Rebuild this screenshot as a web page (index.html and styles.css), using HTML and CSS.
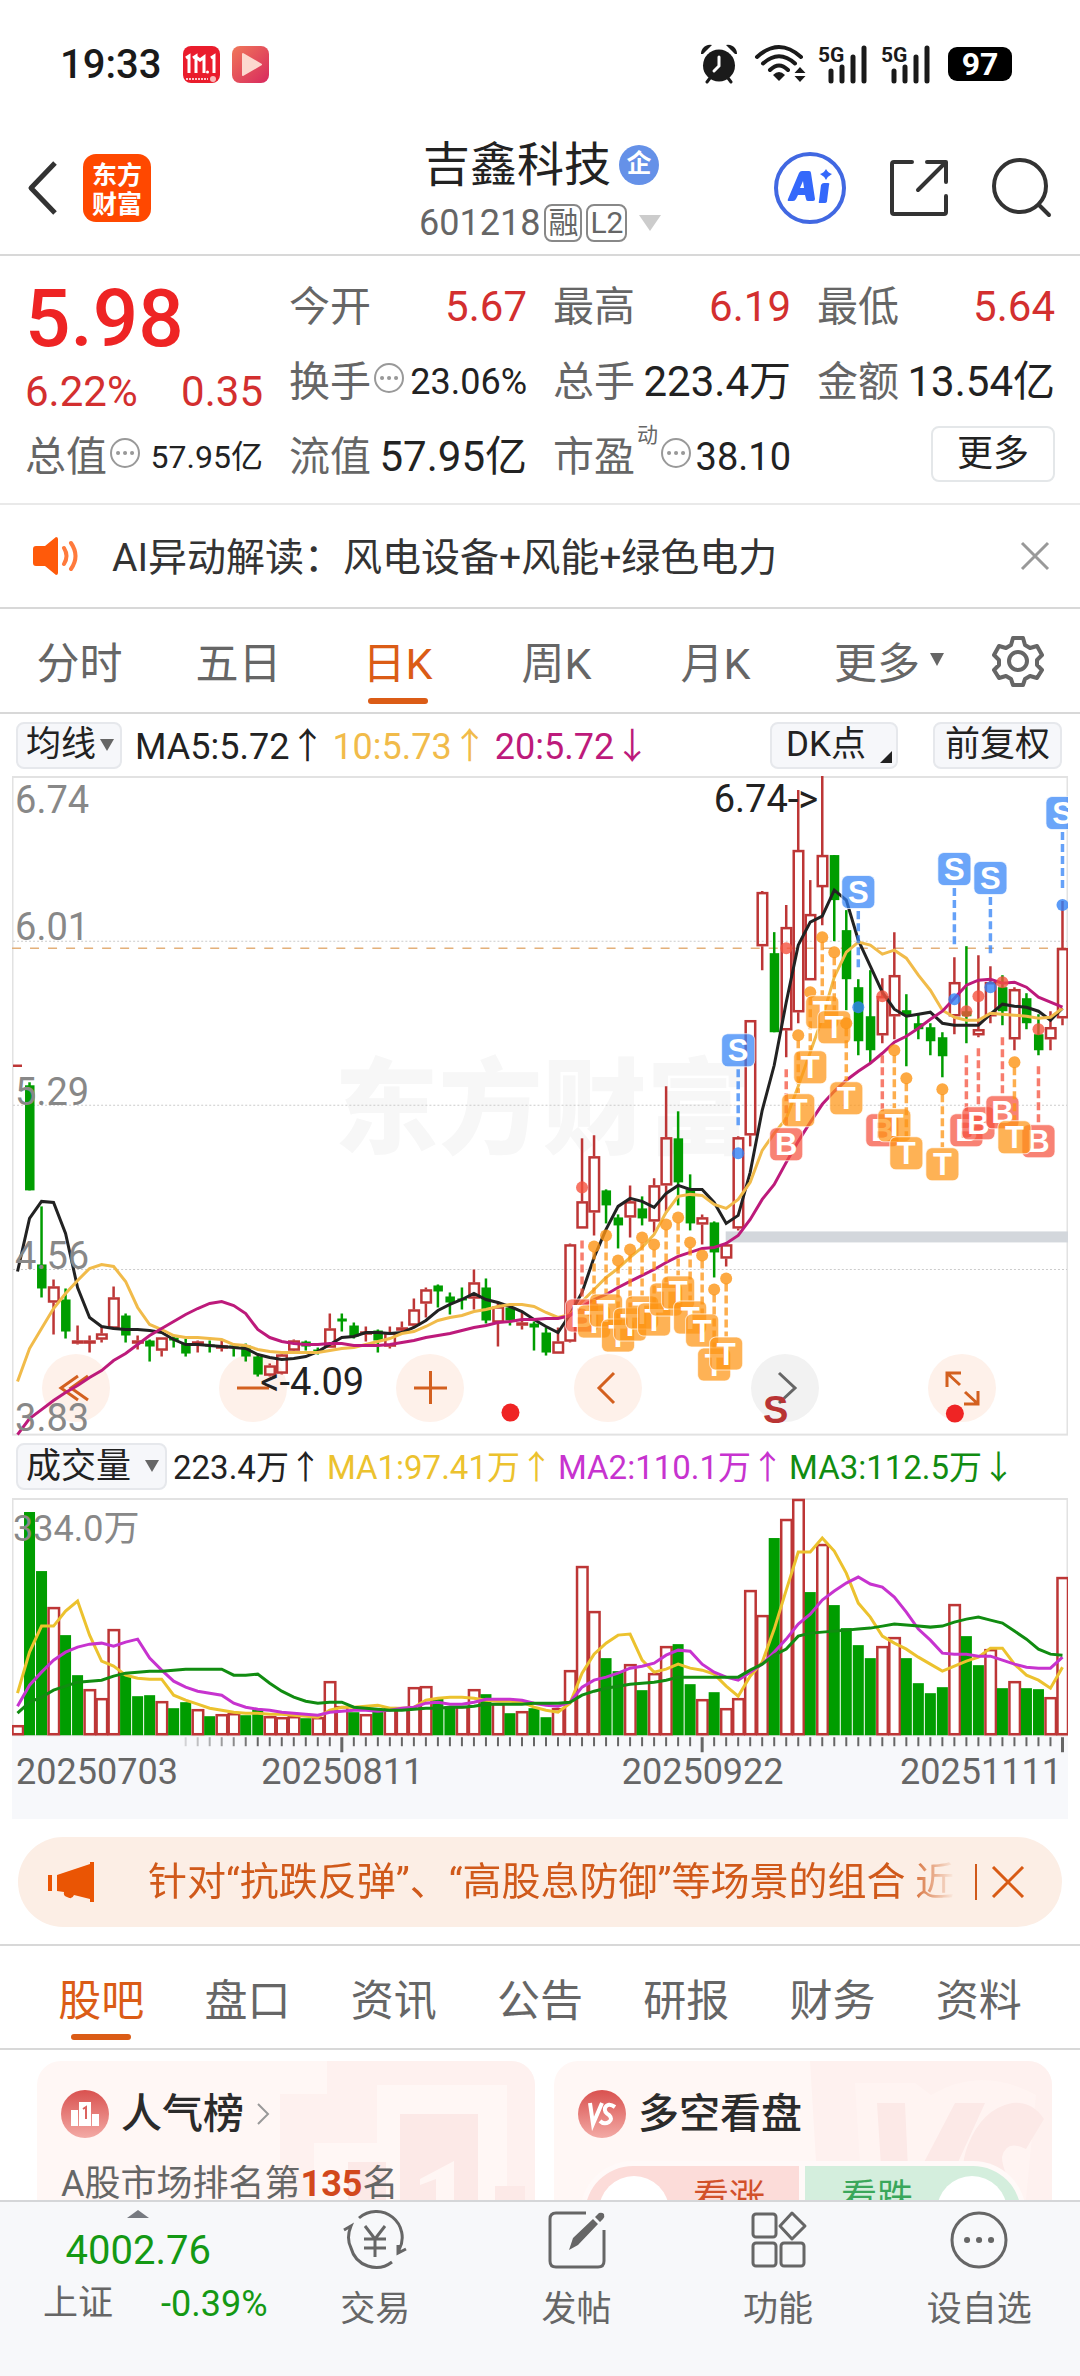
FILE: index.html
```html
<!DOCTYPE html>
<html lang="zh-CN">
<head>
<meta charset="utf-8">
<meta name="viewport" content="width=device-width, initial-scale=1">
<title>吉鑫科技 601218</title>
<link rel="stylesheet" href="styles.css">
</head>
<body>
<div class="app">
  <div class="status">
    <span class="clock">19:33</span>
    <svg class="app-ico" viewBox="0 0 37 37"><rect width="37" height="37" rx="8" fill="#ea1c2c"/><path d="M3 12l3-2v17M10 12l3-2v17M13 11l4 3 4-3v16M28 12l3-2v17" fill="none" stroke="#fff" stroke-width="3"/><circle cx="24.500" cy="26" r="1.500" fill="#fff"/><path d="M3 33h22" stroke="#fff" stroke-width="1.500" stroke-dasharray="2 1"/><circle cx="30" cy="33" r="3" fill="#f9b9b9"/></svg>
    <svg class="app-ico" viewBox="0 0 37 37"><defs><linearGradient id="play" x1="0" y1="0" x2="1" y2="1"><stop offset="0" stop-color="#f0785a"/><stop offset="1" stop-color="#d8285e"/></linearGradient></defs><rect width="37" height="37" rx="8" fill="url(#play)"/><path d="M11 8l18 10.500L11 29z" fill="#fcd9cf" stroke="#fcd9cf" stroke-width="2" stroke-linejoin="round"/></svg>
    <span class="grow"></span>
    <svg class="st-alarm" viewBox="0 0 38 40" fill="#1a1a1a"><circle cx="19" cy="21.500" r="16"/><path d="M1 10A9 9 0 0 1 12 1L3 10zM37 10A9 9 0 0 0 26 1l9 9z"/><path d="M10 34l-3 4M28 34l3 4" stroke="#1a1a1a" stroke-width="3" stroke-linecap="round"/><path d="M19 13v9l-5 5" fill="none" stroke="#fff" stroke-width="3" stroke-linecap="round"/></svg>
    <svg class="st-wifi" viewBox="0 0 52 40" fill="none" stroke="#1a1a1a" stroke-width="4" stroke-linecap="round"><path d="M3 13Q25-7 47 13M9 19.500Q25 5 41 19.500M16 26Q25 17 34 26"/><path d="M19 31q6-6 12 0l-6 6z" fill="#1a1a1a" stroke="none"/><path d="M40.500 29l5.500-6 5.500 6zM40.500 32h11L46 38z" fill="#1a1a1a" stroke="none"/></svg>
    <svg class="st-sig" viewBox="0 0 50 40"><text x="0" y="18" class="g5">5G</text><path d="M13 27v10M24 23v14M35 13v24M46 4v33" stroke="#1a1a1a" stroke-width="5" stroke-linecap="round"/></svg>
    <svg class="st-sig" viewBox="0 0 50 40"><text x="0" y="18" class="g5">5G</text><path d="M13 27v10M24 23v14M35 13v24M46 4v33" stroke="#1a1a1a" stroke-width="5" stroke-linecap="round"/></svg>
    <span class="battery">97</span>
  </div>

  <header class="head">
    <button class="ib" aria-label="返回"><svg width="32" height="56" viewBox="0 0 32 56"><path d="M28 3L4 28l24 25" fill="none" stroke="#333" stroke-width="5" stroke-linejoin="round"/></svg></button>
    <a class="brand" href="#home"><span>东方</span><span>财富</span></a>
    <div class="title">
      <h1>吉鑫科技<i class="qi">企</i></h1>
      <p>601218<b>融</b><b>L2</b><svg width="22" height="16" viewBox="0 0 22 16"><path d="M0 0h22L11 16z" fill="#ccc"/></svg></p>
    </div>
    <div class="tools">
      <button class="ib" aria-label="AI"><svg width="72" height="72" viewBox="0 0 72 72"><circle cx="36" cy="36" r="34" fill="none" stroke="#4168e2" stroke-width="4"/><path fill="#3468fb" fill-rule="evenodd" d="M25 21q1-2 3-2h7q2 0 2 2l4 26q0 2-2 2h-5q-2 0-2-2l-1-4h-7l-2 4q-1 2-3 2h-4q-2 0-1-2zM29 29l-3 7h4zM47 33q1-2 3-2h4q2 0 1 2l-2 16q0 2-3 2h-4q-2 0-1-2zM52 17q2 4 6 5-4 2-6 6-2-4-6-6 4-1 6-5z"/></svg></button>
      <button class="ib" aria-label="分享"><svg width="58" height="58" viewBox="0 0 58 58" fill="none" stroke="#333" stroke-width="4" stroke-linecap="round" stroke-linejoin="round"><path d="M22 3H4q-2 0-2 2v48q0 2 2 2h50q2 0 2-2V37M37 3h19v20M55 4L28 31"/></svg></button>
      <button class="ib" aria-label="搜索"><svg width="60" height="60" viewBox="0 0 60 60" fill="none" stroke="#333" stroke-width="4" stroke-linecap="round"><circle cx="28" cy="28" r="26"/><path d="M47 47l10 10"/></svg></button>
    </div>
  </header>

  <main class="main">
    <section class="quote">
      <div class="lead">
        <strong class="price">5.98</strong>
        <div class="row red mid"><span>6.22%</span><span>0.35</span></div>
        <div class="row"><span class="lb">总值</span><svg class="dots"><use href="#i-dots"/></svg><span class="v xs">57.95亿</span></div>
      </div>
      <div class="cell"><span class="lb">今开</span><span class="v red">5.67</span></div>
      <div class="cell"><span class="lb">最高</span><span class="v red">6.19</span></div>
      <div class="cell"><span class="lb">最低</span><span class="v red">5.64</span></div>
      <div class="cell"><span class="lb">换手</span><svg class="dots"><use href="#i-dots"/></svg><span class="v sm">23.06%</span></div>
      <div class="cell"><span class="lb">总手</span><span class="v">223.4万</span></div>
      <div class="cell"><span class="lb">金额</span><span class="v">13.54亿</span></div>
      <div class="cell"><span class="lb">流值</span><span class="v">57.95亿</span></div>
      <div class="cell"><span class="lb">市盈</span><sup class="dyn">动</sup><svg class="dots"><use href="#i-dots"/></svg><span class="v md">38.10</span></div>
      <div class="cell end"><button class="more">更多</button></div>
    </section>

    <section class="notice">
      <svg width="46" height="38" viewBox="0 0 46 38"><path d="M3 9h9L23 0q2 0 2 2v34q0 2-2 2L12 29H3q-3 0-3-3V12q0-3 3-3z" fill="#ff5a0a"/><path d="M31 11q5 8 0 16M38 6q9 13 0 26" fill="none" stroke="#ff7a3c" stroke-width="4" stroke-linecap="round"/></svg>
      <p>AI异动解读：风电设备+风能+绿色电力</p>
      <button class="ib" aria-label="关闭"><svg width="30" height="30" viewBox="0 0 30 30"><path d="M2 2l26 26M28 2L2 28" stroke="#999" stroke-width="3"/></svg></button>
    </section>

    <nav class="periods">
      <a href="#m">分时</a><a href="#d5">五日</a><a href="#d" class="on">日K</a><a href="#w">周K</a><a href="#mo">月K</a><a href="#more">更多<svg width="14" height="14" viewBox="0 0 14 14"><path d="M0 0h14L7 13z" fill="#666"/></svg></a>
      <button class="ib" aria-label="设置"><svg width="52" height="52" viewBox="0 0 52 52" fill="none" stroke="#666" stroke-width="4" stroke-linejoin="round"><path d="M21 3h10l2 7 5 3 7-2 5 9-5 5v5l5 5-5 8-7-2-5 3-2 6H21l-2-6-5-3-7 2-5-8 5-5v-5l-5-5 5-9 7 2 5-3z"/><circle cx="26" cy="26" r="9"/></svg></button>
    </nav>

    <section class="chart-wrap">
      <div class="legend">
        <button class="chip">均线<svg width="14" height="13" viewBox="0 0 14 13"><path d="M0 0h14L7 12z" fill="#666"/></svg></button>
        <span class="k">MA5:5.72↑</span><span class="y">10:5.73↑</span><span class="m">20:5.72↓</span>
        <span class="grow"></span>
        <button class="chip dk">DK点<svg width="12" height="12" viewBox="0 0 12 12"><path d="M12 0v12H0z" fill="#222"/></svg></button>
        <button class="chip">前复权</button>
      </div>
      <div class="price-chart">
        <div class="ctrls">
          <button aria-label="最早"><svg viewBox="0 0 68 68"><path d="M36 22L19 34l17 12M46 22L29 34l17 12"/></svg></button>
          <button aria-label="缩小"><svg viewBox="0 0 68 68"><path d="M18 34h32"/></svg></button>
          <button aria-label="放大"><svg viewBox="0 0 68 68"><path d="M18 34h33M34.500 17v33"/></svg></button>
          <button aria-label="左移"><svg viewBox="0 0 68 68"><path d="M40 19L25 34l15 15"/></svg></button>
          <button aria-label="右移" class="off"><svg viewBox="0 0 68 68"><path d="M28 19l16 15-16 15"/></svg></button>
          <button aria-label="全屏"><svg viewBox="0 0 68 68"><path d="M33 19H19v14M19 19l13 12M50 37v13H36M50 50L37 38"/></svg></button>
        </div>
        <svg id="price" viewBox="0 0 1055 659"></svg>
      </div>
      <div class="legend vol">
        <button class="chip">成交量<svg width="14" height="13" viewBox="0 0 14 13"><path d="M0 0h14L7 12z" fill="#666"/></svg></button>
        <span class="k">223.4万↑</span><span class="g1">MA1:97.41万↑</span><span class="g2">MA2:110.1万↑</span><span class="g3">MA3:112.5万↓</span>
      </div>
      <svg id="volume" viewBox="0 0 1055 321"></svg>
    </section>

    <section class="promo">
      <svg width="46" height="40" viewBox="0 0 46 40"><path d="M0 13h4v16H0zM9 13L42 2V0h4v40h-4v-3l-16-4q-2 5-7 2-4-1-3-5l-7-1z" fill="#ea5504"/></svg>
      <p>针对“抗跌反弹”、“高股息防御”等场景的组合 近</p>
      <button class="ib" aria-label="关闭"><svg width="34" height="32" viewBox="0 0 34 32"><path d="M2 1l30 30M32 1L2 31" stroke="#d85a14" stroke-width="3"/></svg></button>
    </section>

    <nav class="tabs">
      <a href="#guba" class="on">股吧</a><a href="#pankou">盘口</a><a href="#zixun">资讯</a><a href="#gonggao">公告</a><a href="#yanbao">研报</a><a href="#caiwu">财务</a><a href="#ziliao">资料</a>
    </nav>

    <section class="cards">
      <article class="card">
        <svg class="deco" viewBox="0 0 498 200" preserveAspectRatio="xMaxYMin slice"><path d="M290 0H498V200H470V24H340V82H277V200H243V33H290z" fill="#fef1ef"/><path d="M363 53h78v147h-78z" fill="#fce9e7"/><path d="M383 118l34-18v100h-18v-82l-16 6z" fill="#fff6f4"/><path d="M311 101h38v99h-38zM458 125h30v75h-30z" fill="#fce9e7"/></svg>
        <h2><svg width="48" height="48" viewBox="0 0 48 48"><circle cx="24" cy="24" r="24" fill="url(#badge)"/><path d="M10 20h7v16h-7zM18 12h12v24H18zM31 24h7v12h-7z" fill="#fff"/><path d="M22 19l3-2v12" fill="none" stroke="#dc625f" stroke-width="2"/></svg>人气榜<svg width="14" height="24" viewBox="0 0 14 24"><path d="M2 2l10 10L2 22" fill="none" stroke="#999" stroke-width="2"/></svg></h2>
        <p>A股市场排名第<b>135</b>名</p>
      </article>
      <article class="card">
        <svg class="deco" viewBox="0 0 498 200" preserveAspectRatio="xMaxYMin slice"><path d="M256 0H498V200H268z" fill="#fef1ef"/><path d="M301 22h60l16 12q50-30 105 0l-16 166H312z" fill="#fff4f2"/><path d="M323 42h28l4 88 46-88h30l-72 158h-26zM440 200q-6-30-22-56-16-30-4-60 14-36 44-42 20-2 32 16l-18 30q-20-10-24 8 0 14 16 38 16 24 8 66z" fill="#fce9e7"/></svg>
        <h2><svg width="48" height="48" viewBox="0 0 48 48"><circle cx="24" cy="24" r="24" fill="url(#badge)"/><path d="M12 13l3 21L24 13M37 17q-7-5-10 1-1 4 4 7 4 4 0 7-5 3-9-1" fill="none" stroke="#fff" stroke-width="4"/></svg>多空看盘</h2>
        <div class="vote"><button class="up"><i></i>看涨</button><button class="down">看跌<i></i></button></div>
      </article>
    </section>
  </main>

  <nav class="bottom">
    <a class="index" href="#sh"><svg width="22" height="8" viewBox="0 0 22 8"><path d="M0 8L11 0l11 8z" fill="#777a80"/></svg><strong>4002.76</strong><span><em>上证</em>-0.39%</span></a>
    <a href="#trade"><svg viewBox="0 0 66 60"><path d="M17 8A26 26 0 0 1 57 40M2 20l7-4q-5 12 0 22A26 26 0 0 0 50 52M64 39l-8 4V35M23 16l10 13 10-13M22 29h22M22 38h22M33 29v18"/></svg>交易</a>
    <a href="#post"><svg viewBox="0 0 66 60"><path d="M42 3H12q-6 0-6 6v42q0 6 6 6h42q6 0 6-6V20"/><path d="M25 40l4-12L49 9l5 5-20 21zM51 7l4-4q3-1 5 1 1 3-1 5l-3 3z" fill="#666" stroke="none"/></svg>发帖</a>
    <a href="#func"><svg viewBox="0 0 66 60"><rect x="8" y="4" width="23" height="23" rx="3"/><rect x="8" y="33" width="23" height="23" rx="3"/><rect x="36" y="33" width="23" height="23" rx="3"/><path d="M47 3l13 13-13 13-12-13z" stroke-linejoin="round"/></svg>功能</a>
    <a href="#fav"><svg viewBox="0 0 66 60"><circle cx="33" cy="30" r="27"/><path d="M21 30h.1M33 30h.1M45 30h.1" stroke-width="6" stroke-linecap="round"/></svg>设自选</a>
  </nav>
</div>

<svg class="defs" width="0" height="0">
  <linearGradient id="badge" x1="0" y1="0" x2="0" y2="1"><stop offset="0" stop-color="#d9514f"/><stop offset="1" stop-color="#f3aaa5"/></linearGradient>
  <symbol id="i-dots" viewBox="0 0 30 30"><circle cx="15" cy="15" r="14" fill="none" stroke="#999" stroke-width="2"/><path d="M8 15h.1M15 15h.1M22 15h.1" stroke="#999" stroke-width="4" stroke-linecap="round"/></symbol>
</svg>
<script src="chart.js"></script>
</body>
</html>
```
FILE: styles.css
```css
* { box-sizing: border-box; margin: 0; padding: 0; }
body { font-family: Roboto, "Noto Sans CJK SC", sans-serif; color: #222; background: #fff; }
button { font: inherit; color: inherit; background: none; border: 0; }
a { color: inherit; text-decoration: none; }
svg { display: block; flex: none; }
i, em { font-style: normal; }
.defs { position: absolute; }
.app { height: 100vh; display: flex; flex-direction: column; overflow: hidden; }
.main { flex: 1; min-height: 0; overflow-y: auto; scrollbar-width: none; }
.grow { flex: 1; }
.ib { display: flex; align-items: center; justify-content: center; }
.red { color: #d32f2f; }

.status { display: flex; align-items: center; height: 128px; padding: 0 68px 0 60px; flex: none; }
.clock { font-size: 40px; font-weight: 500; color: #1a1a1a; margin-right: 22px; }
.app-ico { width: 37px; height: 37px; margin-right: 12px; }
.st-alarm { width: 38px; height: 40px; margin-right: 16px; }
.st-wifi { width: 52px; height: 40px; margin-right: 12px; }
.st-sig { width: 50px; height: 40px; margin-right: 13px; overflow: visible; }
.g5 { font-size: 21px; font-weight: 700; fill: #1a1a1a; }
.battery { margin-left: 4px; width: 64px; height: 34px; border-radius: 9px; background: #000; color: #fff; font-size: 32px; font-weight: 700; line-height: 34px; text-align: center; }

.head { display: flex; align-items: center; justify-content: space-between; height: 128px; padding: 0 28px 6px 27px; border-bottom: 2px solid #d8d8d8; flex: none; }
.brand { display: flex; flex-direction: column; justify-content: center; align-items: center; width: 68px; height: 68px; margin-left: 24px; border-radius: 13px; background: #ff4800; color: #fff; font-size: 25px; line-height: 29px; font-weight: 700; font-family: "Noto Sans CJK SC", sans-serif; }
.title { flex: 1; padding: 10px 0 0 268px; }
.title h1 { display: flex; align-items: center; gap: 8px; font-size: 47px; line-height: 60px; font-weight: 400; padding-left: 4px; }
.qi { width: 40px; height: 40px; border-radius: 50%; background: #6591e8; color: #fff; font-size: 25px; line-height: 38px; text-align: center; font-weight: 700; }
.title p { display: flex; align-items: center; gap: 4px; font-size: 36px; line-height: 56px; color: #666; }
.title b { font-weight: 400; border: 2px solid #888; border-radius: 8px; height: 38px; line-height: 33px; font-size: 30px; padding: 0 2px; }
.title p svg { margin-left: 8px; }
.tools { display: flex; align-items: center; gap: 44px; }

.quote { display: grid; grid-template-columns: repeat(4, 1fr); grid-template-rows: repeat(3, 75px); column-gap: 26px; padding: 13px 25px 9px; border-bottom: 2px solid #e9e9e9; }
.lead { grid-row: span 3; display: flex; flex-direction: column; }
.price { font-size: 80px; font-weight: 500; line-height: 100px; height: 96px; color: #ee2424; }
.row, .cell { display: flex; align-items: center; font-size: 42px; line-height: 60px; white-space: nowrap; }
.row { height: 75px; }
.mid { height: 54px; justify-content: space-between; }
.lb { color: #666; font-size: 41px; }
.v { margin-left: auto; }
.sm { font-size: 36px; }
.md { font-size: 38px; }
.xs { font-size: 32px; }
.dots { width: 30px; height: 30px; margin: 0 2px 8px 3px; }
.dyn { font-size: 21px; line-height: 24px; color: #666; align-self: flex-start; margin: 4px 0 0 2px; }
.end { justify-content: flex-end; }
.more { width: 124px; height: 56px; border: 2px solid #e4e7e9; border-radius: 8px; font-size: 36px; line-height: 48px; margin-bottom: 6px; }

.notice { display: flex; align-items: center; height: 104px; padding: 0 30px 0 33px; border-bottom: 2px solid #d8d8d8; }
.notice p { flex: 1; padding: 0 0 4px 33px; font-size: 39px; color: #333; }

.periods { display: grid; grid-template-columns: repeat(5, 159fr) 188fr 70fr; align-items: center; height: 105px; padding-right: 27px; border-bottom: 2px solid #d8d8d8; font-size: 43px; color: #666; }
.periods a, .tabs a { display: flex; align-items: center; justify-content: center; height: 100%; }
.periods a { padding-bottom: 2px; }
.periods a svg { margin-left: 10px; }
.on { position: relative; color: #db5c16; }
.on::after { content: ""; position: absolute; left: 50%; bottom: 8px; width: 60px; height: 6px; margin-left: -30px; border-radius: 3px; background: #db5c16; }

.chart-wrap { padding: 0 12px; }
.legend { display: flex; align-items: center; gap: 7px; height: 62px; font-size: 36px; white-space: nowrap; }
.legend span { padding-bottom: 4px; }
.chip { display: flex; align-items: center; gap: 4px; height: 47px; padding: 0 6px 0 8px; margin: 0 6px 0 4px; border: 2px solid #e6e8ec; border-radius: 8px; background: #f6f7fa; font-size: 35px; line-height: 44px; }
.dk { gap: 14px; padding: 0 4px 0 14px; margin-right: 24px; }
.dk svg { align-self: flex-end; margin-bottom: 4px; }
.dk + .chip { padding: 0 10px; }
.y { color: #f1bb4a; }
.m { color: #bd1a7b; }
.vol { font-size: 33px; gap: 5px; }
.vol .chip { gap: 14px; margin-right: 1px; }
.g1 { color: #ecc22e; }
.g2 { color: #c733cf; }
.g3 { color: #118c11; }

.price-chart { position: relative; }
#price { position: relative; width: 100%; height: auto; pointer-events: none; }
#volume { width: 100%; height: auto; }
.ctrls { position: absolute; left: 0; right: 0; bottom: 2%; display: flex; justify-content: space-between; padding: 0 72px 0 30px; }
.ctrls button { width: 68px; height: 68px; border-radius: 50%; background: #fef1ea; }
.ctrls svg { fill: none; stroke: #d3601f; stroke-width: 3; }
.ctrls .off { background: #f2f2f2; }
.ctrls .off svg { stroke: #666; }
#price text { font-size: 38px; }
#volume text { font-size: 36px; }
#price .bt { font-size: 31px; font-weight: 700; fill: #fff; text-anchor: middle; font-family: "Liberation Sans", sans-serif; }
#price .wm { font-size: 104px; font-weight: 900; fill: #f7f7f7; }
#price .sell { font-size: 38px; font-weight: 700; fill: #b93434; text-anchor: middle; font-family: "Liberation Sans", sans-serif; }
.ax { fill: #888; }

.promo { display: flex; align-items: center; height: 90px; margin: 18px 18px 17px; padding: 0 37px 0 30px; border-radius: 45px; background: #fceee5; color: #d0591a; }
.promo p { flex: 1; overflow: hidden; margin-left: 54px; font-size: 39px; white-space: nowrap; line-height: 56px; -webkit-mask-image: linear-gradient(90deg, #000 94%, transparent); mask-image: linear-gradient(90deg, #000 94%, transparent); }
.promo .ib { border-left: 2px solid #d0591a; height: 36px; padding-left: 14px; margin-left: 20px; }

.tabs { display: grid; grid-template-columns: repeat(7, 1fr); height: 106px; padding: 0 28px; border-top: 2px solid #d8d8d8; border-bottom: 2px solid #d8d8d8; font-size: 43px; color: #666; }

.cards { display: grid; grid-template-columns: 1fr 1fr; gap: 19px; padding: 11px 28px 24px 37px; }
.card { position: relative; overflow: hidden; height: 220px; padding: 28px 24px; border-radius: 24px; background: #fff7f5; }
.deco { position: absolute; inset: 0; width: 100%; height: 200px; }
.card h2 { position: relative; display: flex; align-items: center; gap: 12px; height: 50px; font-size: 41px; line-height: 48px; font-weight: 500; color: #2b2b2b; }
.card p { position: relative; margin-top: 18px; font-size: 36px; line-height: 54px; color: #666; }
.card b { color: #d2481c; font-weight: 700; }
.vote { position: relative; display: flex; gap: 6px; margin: 22px 2px 0; padding: 5px; border-radius: 60px; background: #fff9f8; font-size: 36px; }
.vote button { flex: 1; display: flex; justify-content: space-between; height: 96px; padding: 10px 34px 0 14px; line-height: 44px; }
.vote i { width: 70px; height: 70px; border-radius: 50%; background: #fff; }
.vote .up { border-radius: 48px 0 0 48px; background: #fcdcd9; color: #d2502a; }
.vote .down { border-radius: 0 48px 48px 0; background: #d4eedd; color: #3aa75a; padding: 10px 14px 0 36px; }

.bottom { display: grid; grid-template-columns: 274fr repeat(4, 201fr); height: 176px; flex: none; border-top: 2px solid #d5d6d8; background: #f7f8fa; font-size: 35px; line-height: 52px; color: #666; }
.bottom a { display: flex; flex-direction: column; align-items: center; padding-top: 8px; gap: 14px; }
.bottom a svg { width: 66px; height: 60px; fill: none; stroke: #666; stroke-width: 3; }
.bottom .index { gap: 0; padding: 8px 0 0 2px; color: #149914; }
.bottom .index svg { width: 22px; height: 8px; stroke: none; }
.index strong { font-size: 40px; font-weight: 400; line-height: 66px; }
.index span { display: flex; gap: 48px; padding-left: 34px; font-size: 36px; line-height: 40px; }
.index em { font-size: 35px; color: #666; }
```
FILE: chart.js
```js
// Candles: direction, high, body top, body bottom, low (chart units, one slot every 12).
const candles = `R 289 288 290 289|G 306 309 414 414|G 430 488 512 521|R 503 510 526 558|G 512 523 555 562|R 549 564 567 568|R 559 564 566 576|R 550 557 563 566
R 510 521 552 553|G 537 539 559 566|R 559 564 566 573|G 563 564 570 585|R 561 561 574 580|G 559 561 564 571|G 562 567 577 580|R 564 565 568 576
G 564 568 570 576|R 563 569 571 575|G 567 569 571 580|G 567 569 580 585|G 579 580 598 600|R 587 589 599 600|R 577 578 597 598|R 563 564 574 575
G 564 565 570 574|G 571 573 575 578|R 537 552 571 571|G 537 542 545 555|G 546 549 560 562|R 550 555 557 565|G 553 554 564 576|R 550 556 570 572
R 545 551 553 555|R 522 533 549 551|R 511 513 527 541|G 508 509 515 531|G 516 520 526 538|G 511 522 524 533|R 493 506 522 533|G 502 511 544 547
R 525 530 546 570|G 528 531 544 549|R 536 546 549 553|G 545 547 551 574|G 551 556 576 579|R 551 565 577 577|R 467 468 565 566|R 362 425 452 452
R 359 380 436 459|G 413 414 429 447|G 438 441 449 472|R 409 425 441 461|G 420 432 442 449|R 402 409 445 456|R 310 361 409 436|G 335 362 406 429
G 398 413 447 454|R 438 441 448 468|G 445 446 476 501|R 466 468 482 490|R 360 361 452 454|R 244 244 359 370|R 115 116 170 194|G 156 177 256 256
R 129 151 254 281|R 14 74 236 247|R 104 138 204 204|R 0 79 111 149|G 79 79 124 165|G 134 154 203 234|G 203 211 265 279|G 194 240 274 287
R 202 220 259 267|R 156 199 240 263|G 218 234 239 290|G 237 247 253 263|G 247 251 265 279|G 256 261 280 301|R 181 206 240 258|G 170 235 240 267
R 179 253 259 261|R 190 206 240 247|G 199 211 235 249|R 211 213 263 274|G 217 222 247 253|G 238 258 274 279|R 235 251 263 274|R 125 172 242 249`
  .split(/[|\n]/).map(s => s.trim().split(' '));

const ma5 = [495,442,425,426,457,511,541,550,552,553,553,554,556,563,568,568,569,570,571,572,578,581,583,582,580,575,568,561,560,556,556,557,556,551,544,534,528,523,517,523,526,530,535,543,550,556,538,516,481,453,430,422,425,431,417,409,413,413,426,447,439,396,334,289,226,169,146,140,114,124,164,190,216,233,240,238,236,247,249,249,249,238,228,230,231,235,244,232];
const ma10 = [605,572,552,532,517,504,492,488,490,505,531,548,553,559,561,561,562,563,568,569,573,575,576,576,576,576,574,572,571,568,565,562,557,555,550,544,541,539,535,533,530,528,528,530,536,541,538,525,513,501,492,481,471,458,436,420,418,419,428,432,423,406,374,357,342,310,276,242,201,176,166,169,178,174,182,199,214,234,241,244,244,237,238,239,240,242,241,232];
const ma20 = [658,642,633,624,616,609,601,594,584,577,568,559,552,545,538,532,527,525,529,537,553,561,565,567,568,568,567,567,569,569,569,568,566,564,561,559,557,554,551,549,546,545,543,543,542,542,539,530,523,518,511,505,499,493,486,480,476,472,471,467,459,443,423,408,386,365,346,328,315,304,295,287,277,266,260,252,243,235,222,209,204,203,207,206,211,221,226,231];

// Signals: slot, badge centre, dot centre.
const sells = [[60,274,377],[70,116,231],[78,93,223],[81,102,211],[87,37,129]];
const buys = [[47,539,411],[64,368,172],[72,354,220],[79,354,235],[80,347,220],[82,336,206],[85,365,253]];
const ts = [[48,545],[49,534],[50,559],[51,548],[52,536],[53,543],[54,523],[55,516],[56,541],[57,554],[58,588],[59,577],[65,334],[66,291],[67,236],[68,251],[69,322],[73,349],[74,377],[77,388],[83,361]];

const X = i => 5.5 + 12 * i;
const GREEN = '#009d00', RED = '#bd3636';
const line = (p, c) => `<polyline points="${p.map((y, i) => X(i) + ',' + y).join(' ')}" fill="none" stroke="${c}" stroke-width="3"/>`;
const frame = h => `<rect x="0.500" y="1" width="1054" height="${h}" fill="none" stroke="#e2e2e2" stroke-width="2"/>`;

const candle = ([d, h, t, b, l], i) => {
  h = +h; t = +t; b = +b; l = +l;
  const x = X(i);
  if (i === 0) return `<path d="M1 ${t + 1.5}h9" stroke="${RED}" stroke-width="2.500"/>`;
  if (d === 'G') return `<path d="M${x} ${h}V${l}" stroke="${GREEN}" stroke-width="2.500"/><rect x="${x - 4.5}" y="${t}" width="9.500" height="${b - t}" fill="${GREEN}"/>`;
  return `<path d="M${x} ${h}V${t}M${x} ${b}V${l}" stroke="${RED}" stroke-width="2.500"/><rect x="${x - 4.5}" y="${t + 1}" width="9.500" height="${Math.max(b - t - 2, 1)}" fill="none" stroke="${RED}" stroke-width="2.500"/>`;
};
const signal = (letter, i, y, dot, from, to, c) => {
  const x = X(i);
  return `<g><path d="M${x} ${from}V${to}" stroke="${c}" stroke-width="3.500" stroke-dasharray="8 4" opacity="0.750"/><circle cx="${x}" cy="${dot}" r="6" fill="${c}" opacity="0.800"/><rect x="${x - 16.5}" y="${y - 16.5}" width="33" height="33" rx="6" fill="${c}" fill-opacity="0.720" stroke="#fff" stroke-opacity="0.700"/><text class="bt" x="${x}" y="${y + 11}">${letter}</text></g>`;
};

let s = '<text class="wm" x="322" y="370">东方财富</text>' + frame(657);
for (const y of [165, 329, 493]) s += `<path d="M1 ${y}H1054" stroke="#ccc" stroke-width="1" stroke-dasharray="2 2"/>`;
s += '<path d="M0 172H1054" stroke="#e3b07a" stroke-width="1.500" stroke-dasharray="9 9"/>';
s += '<rect x="713" y="455" width="342" height="11" fill="#d3d7dc"/>';
s += candles.map(candle).join('');
s += line(ma5, '#222') + line(ma10, '#f1bb4a') + line(ma20, '#bd1a7b');
for (const [i, y, d] of buys) s += signal('B', i, y, d, y - 75, y - 17, '#f5523e');
for (const [i, y] of ts) s += signal('T', i, y, y - 75, y - 70, y - 17, '#fd9413');
for (const [i, y, d] of sells) s += signal('S', i, y, d, y + 19, y + 76, '#3282f6');
[['6.74', 37], ['6.01', 164], ['5.29', 329], ['4.56', 493], ['3.83', 654]].forEach(([t, y]) => { s += `<text class="ax" x="3" y="${y}">${t}</text>`; });
s += '<text x="701" y="36" fill="#222">6.74-&gt;</text><text x="248" y="618" fill="#222">&lt;-4.09</text>';
s += '<circle cx="498" cy="636" r="9" fill="#ef2424"/><circle cx="942" cy="637" r="9" fill="#ef2424"/><text class="sell" x="763" y="646">S</text>';
document.getElementById('price').innerHTML = s;

// Volume bars: tops measured from the frame, base line at 237.
const dirs = 'RGGRGGRRRGGGRGGRGRRGGRRRGRRRGRGRRRRGGRRGRGRGGRRRRGGRGRRGGRGRRRRGRRGRGGGGRRGGGGRGGRGRGGRR';
const tops = [227,14,73,109,137,177,191,200,131,177,198,197,203,210,204,211,218,216,215,217,211,218,219,218,220,219,183,208,214,216,213,209,210,189,188,200,208,208,191,196,205,215,213,210,219,210,172,68,113,160,173,166,192,175,148,146,186,201,194,210,200,92,117,40,21,1,94,46,107,130,147,160,148,139,160,185,195,189,106,138,167,151,190,183,190,191,199,79];
const v1 = [195,154,128,128,113,103,137,163,168,177,180,181,181,197,202,206,210,212,214,215,215,216,216,217,218,219,212,209,209,208,207,210,210,209,202,200,199,199,200,202,203,203,204,209,212,214,205,175,156,145,137,136,162,174,171,166,170,172,176,188,198,178,164,131,92,54,54,40,53,75,105,119,138,145,151,159,166,173,168,163,159,150,150,166,177,182,190,169];
const v2 = [208,187,174,162,154,149,146,145,148,144,141,160,172,183,189,193,195,197,205,209,211,212,214,215,216,217,214,213,212,212,213,212,210,209,205,204,206,206,204,201,201,201,202,205,207,208,204,189,182,179,175,170,168,165,157,152,153,166,174,179,182,174,166,154,141,126,116,102,93,85,79,86,89,99,114,131,142,155,156,156,158,158,162,166,169,170,170,159];
const v3 = [215,204,199,192,188,184,183,182,178,175,174,173,173,172,171,171,171,171,177,177,176,185,193,199,203,205,204,204,209,210,211,212,212,211,210,210,209,209,208,206,206,206,206,205,205,205,204,197,193,190,188,186,185,184,182,179,179,179,179,179,179,172,166,157,151,138,135,134,133,132,131,130,128,126,127,128,129,128,124,121,119,122,125,133,141,151,156,157];

let v = '<rect x="0" y="238" width="1055" height="83" fill="#f7f8fb"/>' + frame(236);
tops.forEach((t, i) => {
  const x = X(i);
  v += dirs[i] === 'G'
    ? `<rect x="${x - 5.5}" y="${t}" width="11" height="${237 - t}" fill="${GREEN}"/>`
    : `<rect x="${x - 5}" y="${t + 1}" width="10.500" height="${235 - t}" fill="#fff" stroke="${RED}" stroke-width="2.500"/>`;
  if (i >= 14) {
    const major = i === 27 || i === 57 || i === 87;
    v += `<path d="M${X(i)} 239v${major ? 15 : 9}" stroke="#666" stroke-width="${major ? 3 : 2}" opacity="${Math.min(1, (i - 12) / 8)}"/>`;
  }
});
v += line(v1, '#ecc22e') + line(v2, '#c733cf') + line(v3, '#118c11');
v += '<text class="ax" x="1" y="43">334.0万</text>';
v += '<g fill="#666"><text x="4" y="286">20250703</text><text x="330" y="286" text-anchor="middle">20250811</text><text x="690" y="286" text-anchor="middle">20250922</text><text x="1049" y="286" text-anchor="end">20251111</text></g>';
document.getElementById('volume').innerHTML = v;
```
